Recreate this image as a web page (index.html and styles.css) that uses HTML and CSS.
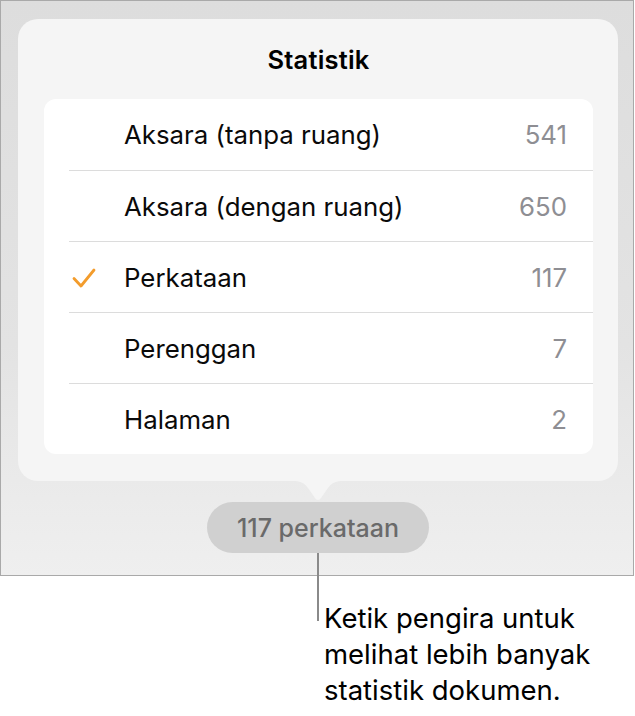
FILE: index.html
```html
<!DOCTYPE HTML>
<html>
<head>
  <title>Statistik</title>
  <meta charset="utf-8">
  <link rel="stylesheet" href="styles.css">
</head>
<body>
  <div class="frame">
    <div class="popover">
      <h1 class="title">Statistik</h1>
      <div class="list">
        <div class="row">
          <span class="mark"></span>
          <span class="label">Aksara (tanpa ruang)</span>
          <span class="value">541</span>
        </div>
        <div class="row">
          <span class="mark"></span>
          <span class="label">Aksara (dengan ruang)</span>
          <span class="value">650</span>
        </div>
        <div class="row">
          <span class="mark">
            <svg width="26" height="22" viewBox="0 0 26 22">
              <path d="M3 11.5 L10 19 L23 3" fill="none" stroke="#f39c2c" stroke-width="2.8" stroke-linecap="round" stroke-linejoin="round"/>
            </svg>
          </span>
          <span class="label">Perkataan</span>
          <span class="value">117</span>
        </div>
        <div class="row">
          <span class="mark"></span>
          <span class="label">Perenggan</span>
          <span class="value">7</span>
        </div>
        <div class="row">
          <span class="mark"></span>
          <span class="label">Halaman</span>
          <span class="value">2</span>
        </div>
      </div>
      <svg class="arrow" width="50" height="22" viewBox="0 0 50 22">
        <path d="M0 0 C8 0 11 2 15 7 L22 17 C23.5 19.5 26.5 19.5 28 17 L35 7 C39 2 42 0 50 0 Z" fill="#f5f5f5"/>
      </svg>
    </div>
    <div class="pill">117 perkataan</div>
  </div>
  <p class="callout">Ketik pengira untuk<br>melihat lebih banyak<br>statistik dokumen.</p>
</body>
</html>
```

FILE: styles.css
```css
body {
  margin: 0;
  font-family: "Inter", "Roboto", sans-serif;
  background-color: #fff;
}

.frame {
  width: 634px;
  height: 576px;
  box-sizing: border-box;
  border: 1px solid #a9a9a9;
  background: linear-gradient(#dddddd, #e3e3e3 60%, #efefef);
  display: flex;
  flex-direction: column;
  align-items: center;
  padding-top: 18px;
}

.popover {
  position: relative;
  width: 600px;
  box-sizing: border-box;
  background-color: #f5f5f5;
  border-radius: 20px;
  padding: 0 25px 27px 26px;
  margin-left: 2px;
}

.title {
  margin: 0;
  height: 80px;
  display: flex;
  justify-content: center;
  align-items: center;
  font-size: 25.5px;
  font-weight: 600;
  color: #000;
  letter-spacing: 0.2px;
}

.list {
  background-color: #fff;
  border-radius: 12px;
  overflow: hidden;
}

.row {
  display: flex;
  align-items: center;
  height: 71px;
  margin-left: 25px;
  border-top: 1px solid #dcdcdc;
  box-sizing: border-box;
  font-size: 25.8px;
}

.row:first-child {
  border-top: none;
}

.mark {
  width: 55px;
  display: flex;
  align-items: center;
}

.mark svg {
  margin-left: 2px;
  margin-top: 2px;
}

.label {
  flex: 1;
  color: #0a0a0a;
}

.value {
  color: #8e8e93;
  padding-right: 26px;
}

.arrow {
  position: absolute;
  left: 275px;
  top: 100%;
  display: block;
}

.pill {
  position: relative;
  margin-top: 21px;
  width: 222px;
  height: 51px;
  border-radius: 26px;
  background-color: #d0d0d0;
  color: #6a6a6a;
  font-size: 25px;
  font-weight: 500;
  display: flex;
  justify-content: center;
  align-items: center;
  margin-left: 2px;
}

.pill::after {
  content: "";
  position: absolute;
  left: 110px;
  top: 100%;
  width: 2px;
  height: 68px;
  background-color: #8a8a8a;
}

.callout {
  margin: 24px 0 0 324px;
  font-size: 27.5px;
  line-height: 36px;
  color: #000;
}
```
